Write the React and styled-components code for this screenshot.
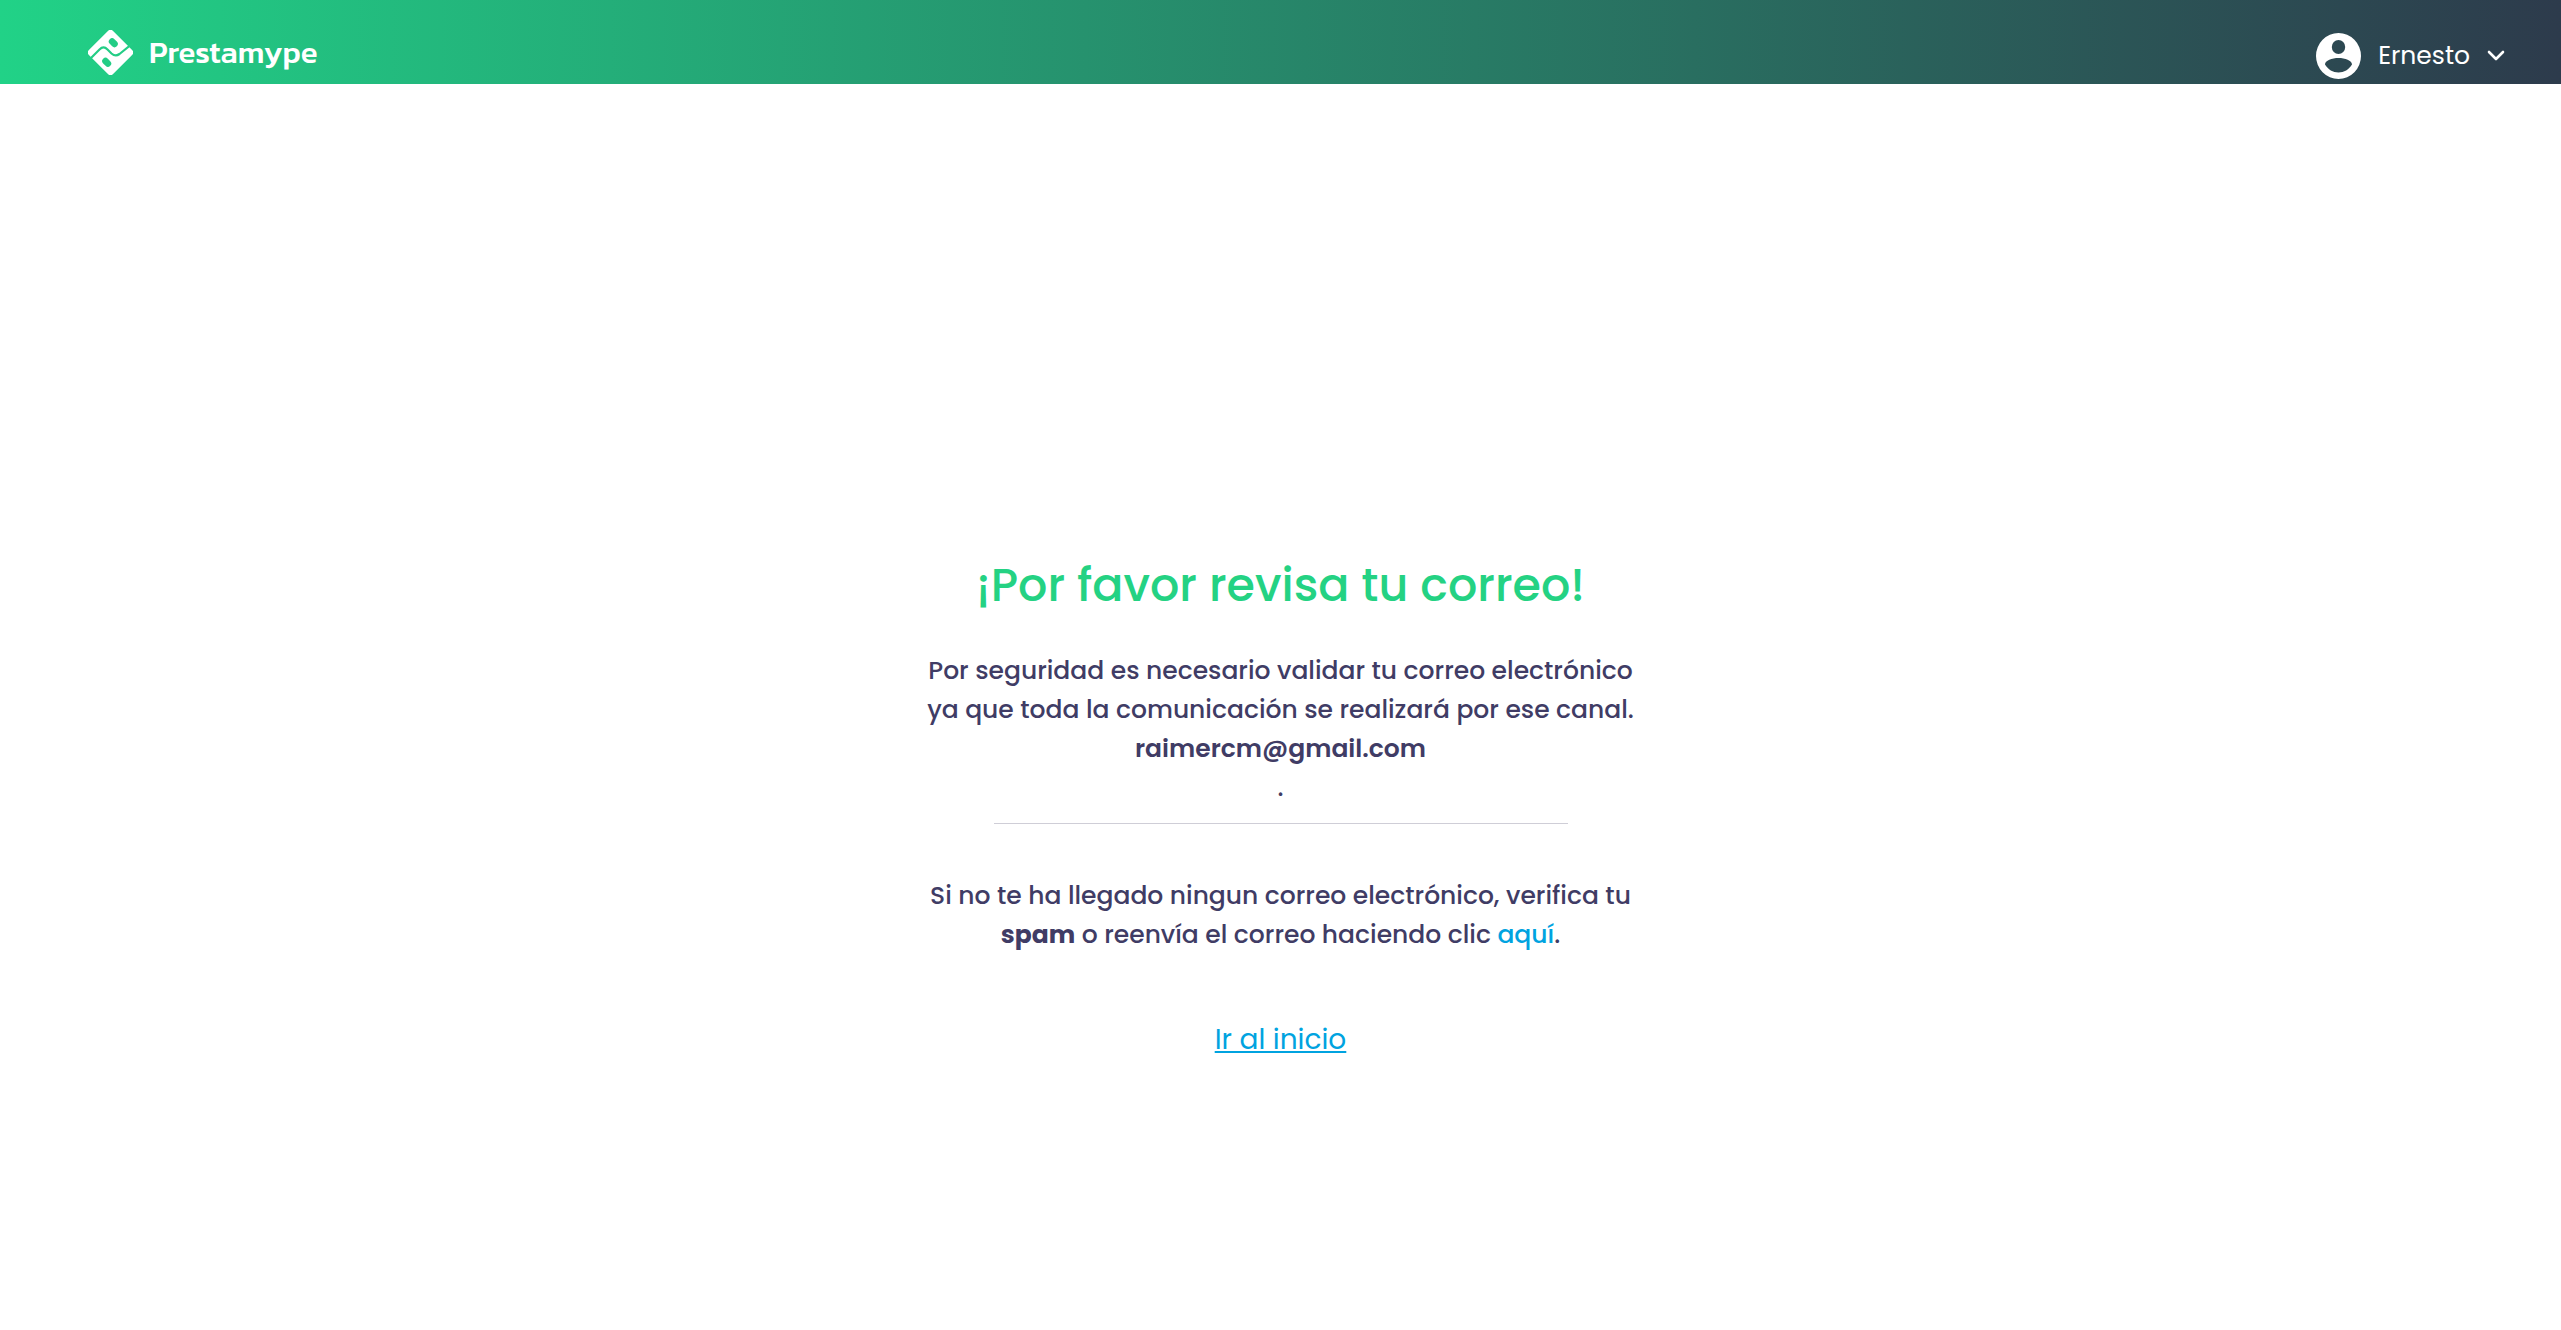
import React from "react";
import styled, { createGlobalStyle } from "styled-components";

const GlobalStyle = createGlobalStyle`
  * { box-sizing: border-box; }
  body {
    margin: 0;
    background: #fff;
    color: #403c65;
    font-family: Poppins, Inter, "Liberation Sans", sans-serif;
  }
`;

const Page = styled.div`
  min-height: 100vh;
  display: flex;
  flex-direction: column;
`;

const Header = styled.header`
  height: 84px;
  padding: 20px 56px 0 88px;
  display: flex;
  align-items: center;
  justify-content: space-between;
  color: #fff;
  background: linear-gradient(to right, #21d287, #2d3b4c);
`;

const Brand = styled.a`
  display: flex;
  align-items: center;
  gap: 16px;
  color: inherit;
  text-decoration: none;
  font-family: Kanit, "Noto Sans", sans-serif;
  font-size: 31px;
  font-weight: 500;
  line-height: 38px;
`;

const UserMenu = styled.button`
  display: flex;
  align-items: center;
  gap: 17px;
  padding: 8px 0 0;
  border: 0;
  background: none;
  color: inherit;
  font: inherit;
  font-size: 25px;
  line-height: 40px;
  cursor: pointer;
`;

const Main = styled.main`
  flex: 1;
  padding: 467px 24px 80px;
  display: flex;
  flex-direction: column;
  align-items: center;
  text-align: center;
`;

const Title = styled.h1`
  margin: 0 0 32px;
  color: #24d283;
  font-size: 46px;
  font-weight: 500;
  line-height: 68px;
`;

const Message = styled.p`
  margin: 0;
  font-size: 25px;
  font-weight: 500;
  line-height: 39px;
`;

const Email = styled.strong`
  display: block;
  font-weight: 600;
`;

const Divider = styled.hr`
  width: 574px;
  max-width: 100%;
  margin: 16px 0 52px;
  border: 0;
  border-top: 1px solid #cfced7;
`;

const ResendLink = styled.a`
  color: #00a3e0;
  text-decoration: none;
`;

const HomeLink = styled.a`
  margin-top: 66px;
  color: #00a3e0;
  font-size: 28px;
  line-height: 40px;
  text-underline-offset: 2px;
  text-decoration-thickness: 2px;
`;

const Logo = () => (
  <svg width="45" height="45" viewBox="0 0 45 45" aria-hidden="true">
    <rect x="5.4" y="5.4" width="34.2" height="34.2" rx="4" transform="rotate(45 22.5 22.5)" fill="#fff" />
    <path d="M1.5 29.5L11.5 19.5Q15.5 15.5 19.5 19.5L23.5 23.5Q27.5 27 31.5 24L45 13" fill="none" stroke="#23cd85" strokeWidth="2.2" />
    <rect x="20.3" y="9.4" width="10" height="6.6" rx="3.3" transform="rotate(45 25.3 12.7)" fill="#23cd85" />
    <rect x="13.7" y="29" width="10" height="6.6" rx="3.3" transform="rotate(45 18.7 32.3)" fill="#23cd85" />
  </svg>
);

const Avatar = () => (
  <svg width="45" height="46" viewBox="0 0 45 46" aria-hidden="true">
    <path
      fill="#fff"
      fillRule="evenodd"
      d="M22.5 0a22.5 23 0 1 0 0 46a22.5 23 0 1 0 0-46z M22.5 7a6.7 7 0 1 1 0 14a6.7 7 0 1 1 0-14z M9 31.5C9 27.5 16 25 22.5 25S36 27.5 36 31.5C33 36.5 28 39.5 22.5 39.5S12 36.5 9 31.5z"
    />
  </svg>
);

const Chevron = () => (
  <svg width="18" height="12" viewBox="0 0 18 12" fill="none" stroke="#fff" strokeWidth="2.6" strokeLinecap="round" strokeLinejoin="round" aria-hidden="true">
    <path d="M2 2l7 7 7-7" />
  </svg>
);

export default function App() {
  return (
    <Page>
      <GlobalStyle />
      <Header>
        <Brand href="#">
          <Logo />
          Prestamype
        </Brand>
        <UserMenu type="button">
          <Avatar />
          Ernesto
          <Chevron />
        </UserMenu>
      </Header>
      <Main>
        <Title>¡Por favor revisa tu correo!</Title>
        <Message>
          Por seguridad es necesario validar tu correo electrónico
          <br />
          ya que toda la comunicación se realizará por ese canal.
          <Email>raimercm@gmail.com</Email>.
        </Message>
        <Divider />
        <Message>
          Si no te ha llegado ningun correo electrónico, verifica tu
          <br />
          <b>spam</b> o reenvía el correo haciendo clic <ResendLink href="#">aquí</ResendLink>.
        </Message>
        <HomeLink href="#">Ir al inicio</HomeLink>
      </Main>
    </Page>
  );
}
